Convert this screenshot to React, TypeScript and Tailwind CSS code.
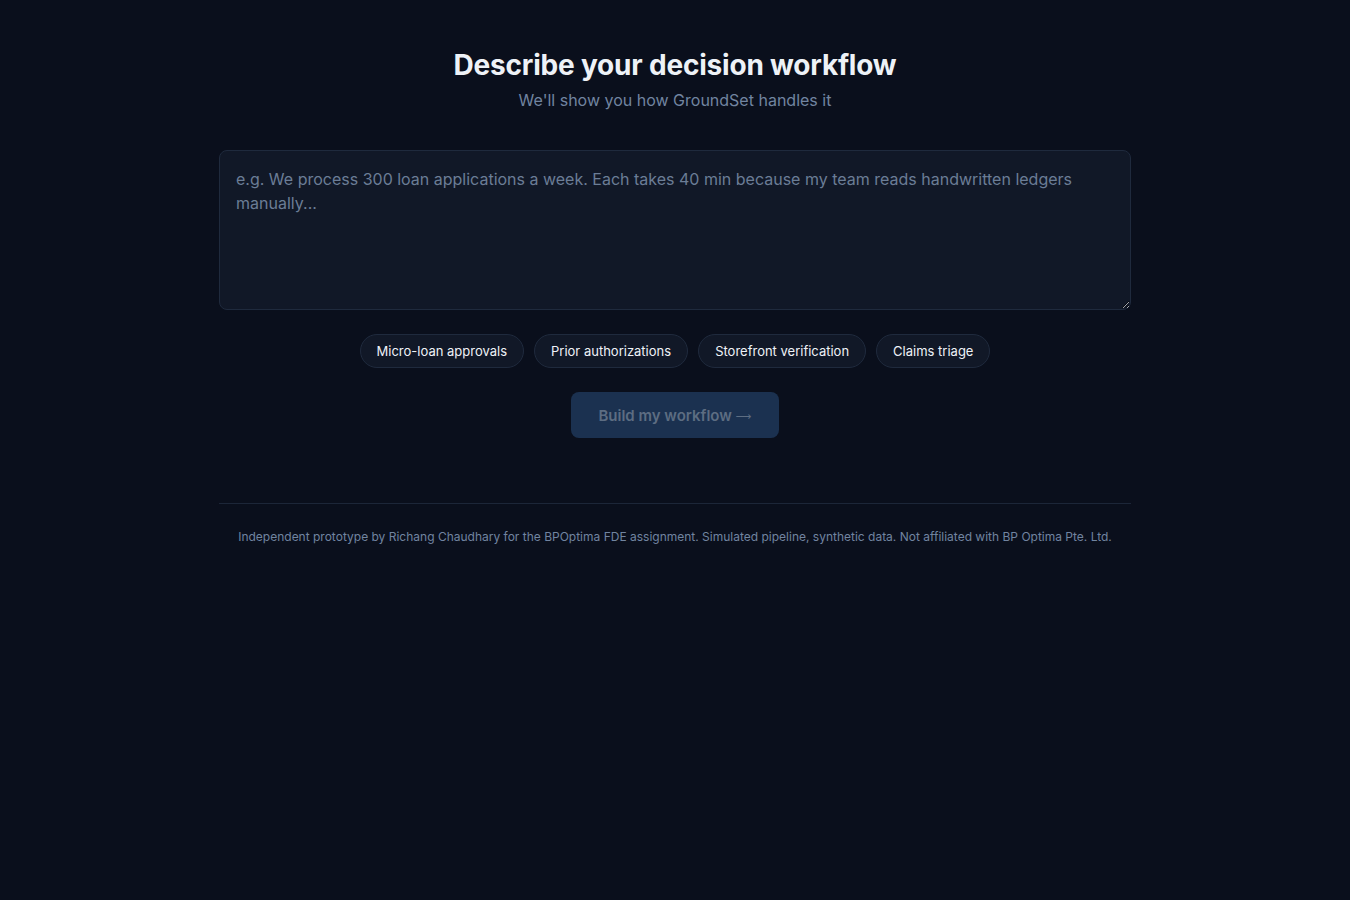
import React, { useState } from 'react';

const examples = [
  'Micro-loan approvals',
  'Prior authorizations',
  'Storefront verification',
  'Claims triage',
];

export default function App() {
  const [text, setText] = useState('');

  return (
    <div
      className="min-h-screen bg-[#0a0f1c] text-[#e5e9f0]"
      style={{ fontFamily: 'Inter, "Noto Sans", sans-serif' }}
    >
      <div className="mx-auto w-[912px] pt-[47px]">
        <div className="text-center">
          <h1 className="text-[28px] font-bold leading-[36px] tracking-[-0.2px] text-[#eef2f7]">
            Describe your decision workflow
          </h1>
          <p className="mt-[5px] text-[16px] leading-[24px] text-[#7184a0]">
            We'll show you how GroundSet handles it
          </p>
        </div>

        <textarea
          value={text}
          onChange={(e) => setText(e.target.value)}
          placeholder="e.g. We process 300 loan applications a week. Each takes 40 min because my team reads handwritten ledgers manually..."
          className="mt-[38px] block h-[160px] w-full rounded-lg border border-[#1f2a3d] bg-[#111827] px-4 py-[16px] text-[16px] leading-[24px] text-[#e5e9f0] placeholder:text-[#6b7d96] outline-none"
        />

        <div className="mt-6 flex justify-center gap-[10px]">
          {examples.map((label) => (
            <button
              key={label}
              onClick={() => setText(label)}
              className="h-[34px] rounded-full border border-[#1f2a3d] bg-[#111827] px-4 pt-[1px] text-[13px] text-[#eef2f7]"
            >
              {label}
            </button>
          ))}
        </div>

        <div className="mt-6 flex justify-center">
          <button
            disabled={!text}
            className="flex h-[46px] w-[208px] items-center justify-center gap-[4px] rounded-lg bg-[#1b3150] pt-[2px] text-[15px] font-semibold text-[#5d6d82]"
          >
            <span>Build my workflow</span>
            <span
              style={{ fontFamily: '"DejaVu Sans", sans-serif' }}
              className="mt-[1px] text-[11px] font-normal leading-none"
            >
              ⟶
            </span>
          </button>
        </div>

        <div className="mt-[65px] border-t border-[#1c2638] pt-[24px] text-center text-[12px] leading-[18px] text-[#7184a0]">
          Independent prototype by Richang Chaudhary for the BPOptima FDE assignment. Simulated pipeline, synthetic data. Not affiliated with BP Optima Pte. Ltd.
        </div>
      </div>
    </div>
  );
}
